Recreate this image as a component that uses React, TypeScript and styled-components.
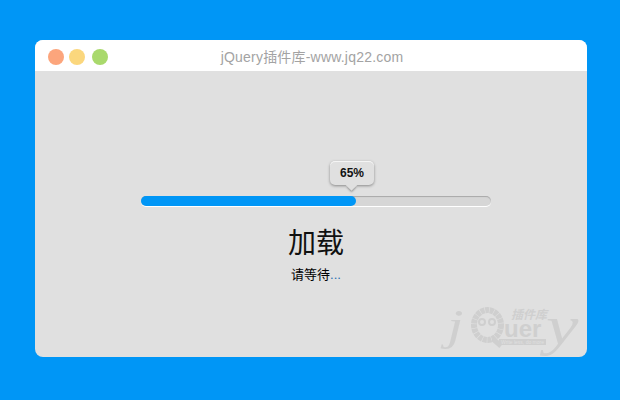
import styled, { createGlobalStyle } from "styled-components";

const progressWidth = 215;

const GlobalStyle = createGlobalStyle`
  html, body {
    margin: 0;
    padding: 0;
    background: #0096f6;
  }
`;

const PAGE = styled.div`
  width: 620px;
  height: 400px;
  box-sizing: border-box;
  padding: 40px 33px 43px 35px;
  overflow: hidden;
`;

const WINDOW = styled.div`
  position: relative;
  height: 317px;
  border-radius: 8px;
  background: #e0e0e0;
  overflow: hidden;
`;

const TITLEBAR = styled.div`
  position: relative;
  height: 31px;
  display: flex;
  align-items: center;
  justify-content: center;
  background: #fff;
`;

const LIGHTS = styled.div`
  position: absolute;
  left: 13px;
  top: 9px;
  display: flex;
  gap: 5px;
`;

const LIGHT = styled.span<{ $color: string; $gap?: number }>`
  width: 16px;
  height: 16px;
  border-radius: 50%;
  background: ${(p) => p.$color};
  margin-left: ${(p) => p.$gap || 0}px;
`;

const TITLE = styled.div`
  font-family: "Liberation Sans", "Noto Sans CJK SC", sans-serif;
  font-size: 14px;
  letter-spacing: 0.2px;
  color: #a3a3a3;
  margin: 1px 0 0 2px;
`;

const BODY = styled.div`
  display: flex;
  flex-direction: column;
  align-items: center;
  padding-top: 125px;
  padding-left: 10px;
`;

const TRACK = styled.div`
  position: relative;
  width: 350px;
  height: 10px;
  box-sizing: border-box;
  border-radius: 6px;
  background: #d6d6d6;
  box-shadow: inset 0 1px 1px #a8a8a8, 0 1px 0 #fff;
`;

const FILL = styled.div`
  height: 10px;
  border-radius: 6px;
  background: #0096f6;
`;

const TOOLTIP = styled.div`
  position: absolute;
  left: 189px;
  top: -35px;
  width: 44px;
  height: 24px;
  border-radius: 5px;
  background: #e0e0e0;
  box-shadow: 0 1px 3px #888, inset 0 1px 0 #f5f5f5;
  display: flex;
  align-items: center;
  justify-content: center;
  font-family: "Liberation Sans", sans-serif;
  font-size: 12px;
  font-weight: 700;
  color: #111;

  &::after {
    content: "";
    position: absolute;
    left: 17px;
    bottom: -4px;
    width: 9px;
    height: 9px;
    background: #e0e0e0;
    transform: rotate(45deg);
    box-shadow: 2px 2px 2px -1px #999;
  }
`;

const HEADING = styled.div`
  margin-top: 20px;
  font-family: "Liberation Serif", "Noto Sans CJK SC", serif;
  font-size: 28px;
  line-height: 36px;
  color: #111;
`;

const SUBTEXT = styled.div`
  margin-top: 4px;
  font-family: "Liberation Sans", "Noto Sans CJK SC", sans-serif;
  font-size: 13px;
  line-height: 18px;
  color: #000;
`;

const DOTS = styled.span`
  color: #2a6fb0;
`;

const WATERMARK = styled.div`
  position: absolute;
  right: 10px;
  bottom: 5px;
  width: 130px;
  height: 46px;
  display: flex;
  align-items: flex-start;
  color: #cfcfcf;
`;

const WMLETTER = styled.span<{ $size: number; $width: number }>`
  flex: none;
  width: ${(p) => p.$width}px;
  font-family: "Liberation Serif", serif;
  font-style: italic;
  font-size: ${(p) => p.$size}px;
  line-height: 40px;
  transform: scaleX(1.35);
  transform-origin: left;
`;

const WMFACE = styled.svg`
  flex: none;
`;

const WMCOLUMN = styled.div`
  flex: none;
  width: 42px;
  display: flex;
  flex-direction: column;
  align-items: flex-start;
`;

const WMCJK = styled.span`
  margin: 2px 0 0 7px;
  font-family: "Noto Sans CJK SC", sans-serif;
  font-style: italic;
  font-weight: 700;
  font-size: 12px;
  line-height: 12px;
  white-space: nowrap;
`;

const WMWORD = styled.span`
  font-family: "Liberation Sans", sans-serif;
  font-weight: 700;
  font-size: 24px;
  line-height: 17px;
`;

const WMSLOGAN = styled.span`
  align-self: flex-end;
  margin-top: 2px;
  padding: 0 2px;
  font-family: "Liberation Sans", sans-serif;
  font-size: 5px;
  line-height: 6px;
  white-space: nowrap;
  color: #e0e0e0;
  background: #cfcfcf;
`;

export default function App() {
  return (
    <PAGE>
      <GlobalStyle />
      <WINDOW>
        <TITLEBAR>
          <LIGHTS>
            <LIGHT $color="#fca57c" />
            <LIGHT $color="#fbd77d" />
            <LIGHT $color="#a9d96c" $gap={2} />
          </LIGHTS>
          <TITLE>jQuery插件库-www.jq22.com</TITLE>
        </TITLEBAR>
        <BODY>
          <TRACK>
            <FILL style={{ width: progressWidth }} />
            <TOOLTIP>65%</TOOLTIP>
          </TRACK>
          <HEADING>加载</HEADING>
          <SUBTEXT>
            请等待<DOTS>...</DOTS>
          </SUBTEXT>
        </BODY>
        <WATERMARK>
          <WMLETTER $size={44} $width={24}>j</WMLETTER>
          <WMFACE width="33" height="42" viewBox="0 0 33 42">
            <ellipse cx="16.5" cy="19" rx="13.5" ry="15" fill="none" stroke="currentColor" strokeWidth="6" strokeDasharray="4 0.6" />
            <path d="M22 33l8 7" stroke="currentColor" strokeWidth="5" fill="none" />
            <circle cx="11" cy="16" r="3" fill="none" stroke="currentColor" strokeWidth="2" />
            <circle cx="21" cy="16" r="3" fill="none" stroke="currentColor" strokeWidth="2" />
          </WMFACE>
          <WMCOLUMN>
            <WMCJK>插件库</WMCJK>
            <WMWORD>uer</WMWORD>
            <WMSLOGAN>Write less, do more</WMSLOGAN>
          </WMCOLUMN>
          <WMLETTER $size={54} $width={30}>y</WMLETTER>
        </WATERMARK>
      </WINDOW>
    </PAGE>
  );
}
